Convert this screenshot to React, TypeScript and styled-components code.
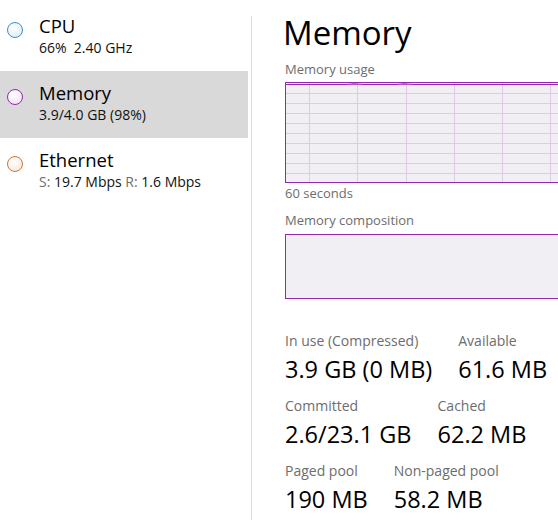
import React from "react";
import styled, { createGlobalStyle } from "styled-components";

const GlobalStyle = createGlobalStyle`
  html, body {
    margin: 0;
    padding: 0;
    background: #ffffff;
    overflow: hidden;
  }
  body {
    font-family: "Open Sans", "Noto Sans", "Liberation Sans", sans-serif;
    color: #000;
  }
`;

const Page = styled.div`
  display: flex;
  width: 558px;
  height: 522px;
  overflow: hidden;
`;

const Sidebar = styled.div`
  width: 248px;
  flex: none;
  padding-top: 4px;
`;

const Divider = styled.div`
  flex: none;
  width: 1px;
  margin: 16px 0 2px 3px;
  background: #d9d9d9;
`;

const Item = styled.div<{ $selected?: boolean }>`
  display: flex;
  height: 67px;
  box-sizing: border-box;
  padding-top: 10px;
  background: ${(p) => (p.$selected ? "#d9d9d9" : "transparent")};
`;

const Dot = styled.div<{ $color: string; $fill: string }>`
  flex: none;
  width: 14px;
  height: 14px;
  margin: 8px 16px 0 7px;
  border-radius: 50%;
  border: 1.6px solid ${(p) => p.$color};
  background: radial-gradient(circle at 40% 35%, #ffffff 0%, ${(p) => p.$fill} 100%);
`;

const ItemText = styled.div`
  display: flex;
  flex-direction: column;
`;

const ItemTitle = styled.div`
  font-size: 18.5px;
  line-height: 24px;
  color: #000;
`;

const ItemSub = styled.div`
  font-size: 14px;
  line-height: 18px;
  margin-top: 1px;
  color: #111;
`;

const Muted = styled.span`
  color: #6d6d6d;
`;

const Main = styled.div`
  flex: none;
  width: 320px;
  padding-left: 33px;
  padding-top: 11px;
`;

const Heading = styled.div`
  font-size: 33px;
  line-height: 44px;
  margin-left: -2px;
  color: #000;
`;

const Caption = styled.div<{ $top: number }>`
  font-size: 13px;
  line-height: 16px;
  color: #6d6d6d;
  margin-top: ${(p) => p.$top}px;
`;

const Chart = styled.div<{ $height: number; $top: number }>`
  box-sizing: border-box;
  width: 300px;
  height: ${(p) => p.$height}px;
  margin-top: ${(p) => p.$top}px;
  border: 1px solid #9528b4;
  background: #f2eff4;
  svg {
    display: block;
  }
`;

const Stats = styled.div`
  margin-top: 33px;
  display: flex;
  flex-direction: column;
  gap: 13px;
`;

const StatRow = styled.div`
  display: flex;
  gap: 26px;
`;

const Stat = styled.div`
  display: flex;
  flex-direction: column;
`;

const StatLabel = styled.div`
  font-size: 14px;
  line-height: 18px;
  color: #6d6d6d;
`;

const StatValue = styled.div`
  font-size: 23.5px;
  line-height: 30px;
  margin-top: 4px;
  color: #000;
`;

function UsageGraph() {
  const w = 298;
  const h = 99;
  const vlines = [23, 71, 120, 168, 216, 264];
  const hlines = [];
  for (let y = 10; y < h; y += 10) hlines.push(y);
  return (
    <svg width={w} height={h}>
      {hlines.map((y) => (
        <line key={"h" + y} x1={0} x2={w} y1={y + 0.5} y2={y + 0.5} stroke="#e3c8e8" strokeWidth={1} />
      ))}
      {vlines.map((x) => (
        <line key={"v" + x} x1={x + 0.5} x2={x + 0.5} y1={0} y2={h} stroke="#e3c8e8" strokeWidth={1} />
      ))}
      <polyline
        points="0,1.5 60,1.5 68,0.8 78,1.5 110,1.5 118,0.8 128,1.5 298,1.5"
        fill="none"
        stroke="#9528b4"
        strokeWidth={1.2}
      />
    </svg>
  );
}

const stats = [
  [
    { label: "In use (Compressed)", value: "3.9 GB (0 MB)" },
    { label: "Available", value: "61.6 MB" },
  ],
  [
    { label: "Committed", value: "2.6/23.1 GB" },
    { label: "Cached", value: "62.2 MB" },
  ],
  [
    { label: "Paged pool", value: "190 MB" },
    { label: "Non-paged pool", value: "58.2 MB" },
  ],
];

export default function App() {
  return (
    <>
      <GlobalStyle />
      <Page>
        <Sidebar>
          <Item>
            <Dot $color="#3d8fcf" $fill="#d6e9f7" />
            <ItemText>
              <ItemTitle>CPU</ItemTitle>
              <ItemSub>66%&nbsp; 2.40 GHz</ItemSub>
            </ItemText>
          </Item>
          <Item $selected>
            <Dot $color="#9528b4" $fill="#f0dcf5" />
            <ItemText>
              <ItemTitle>Memory</ItemTitle>
              <ItemSub>3.9/4.0 GB (98%)</ItemSub>
            </ItemText>
          </Item>
          <Item>
            <Dot $color="#c9783c" $fill="#f6e3d4" />
            <ItemText>
              <ItemTitle>Ethernet</ItemTitle>
              <ItemSub>
                <Muted>S:</Muted> 19.7 Mbps <Muted>R:</Muted> 1.6 Mbps
              </ItemSub>
            </ItemText>
          </Item>
        </Sidebar>
        <Divider />
        <Main>
          <Heading>Memory</Heading>
          <Caption $top={6}>Memory usage</Caption>
          <Chart $height={101} $top={5}>
            <UsageGraph />
          </Chart>
          <Caption $top={2}>60 seconds</Caption>
          <Caption $top={11}>Memory composition</Caption>
          <Chart $height={65} $top={6} />
          <Stats>
            {stats.map((row, i) => (
              <StatRow key={i}>
                {row.map((s) => (
                  <Stat key={s.label}>
                    <StatLabel>{s.label}</StatLabel>
                    <StatValue>{s.value}</StatValue>
                  </Stat>
                ))}
              </StatRow>
            ))}
          </Stats>
        </Main>
      </Page>
    </>
  );
}
